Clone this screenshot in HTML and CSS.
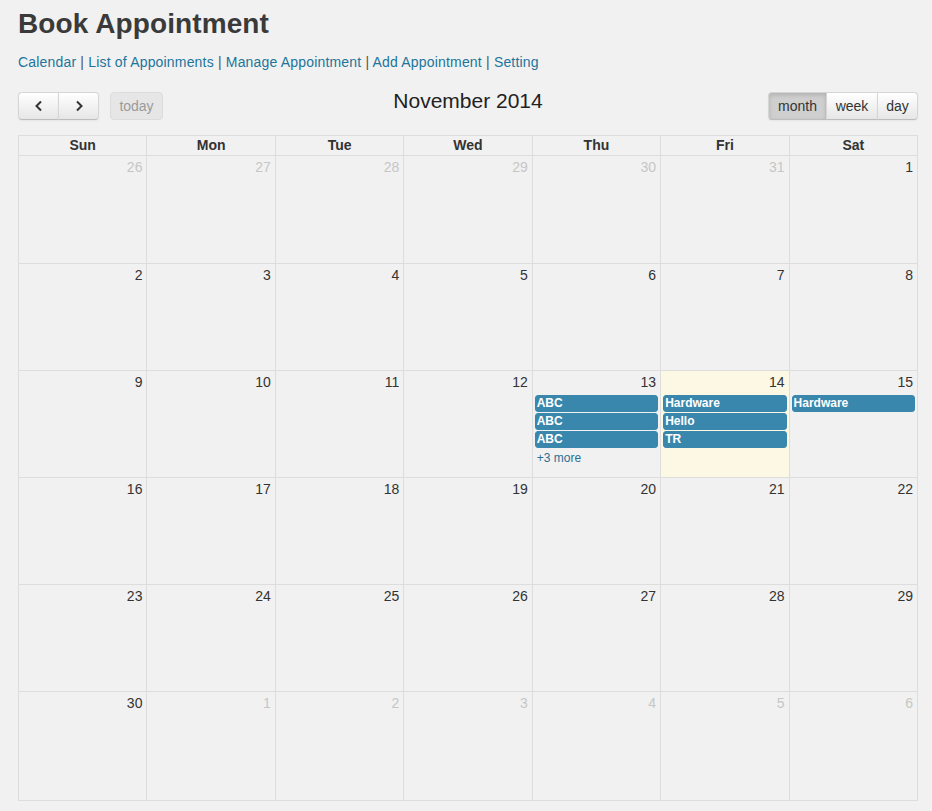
FILE: index.html
```html
<!DOCTYPE html>
<html>
<head>
<meta charset="utf-8">
<link rel="stylesheet" href="styles.css">
</head>
<body>
<div class="wrap">
  <h1 class="title">Book Appointment</h1>
  <nav class="links">
    <a href="#">Calendar</a> | <a href="#">List of Appoinments</a> | <a href="#">Manage Appointment</a> | <a href="#">Add Appointment</a> | <a href="#">Setting</a>
  </nav>
  <div class="toolbar">
    <div class="tb-left">
      <div class="btn-group">
        <button class="btn btn-icon"><svg width="12" height="12" viewBox="0 0 12 12"><polyline points="8,1.5 3.5,6 8,10.5" fill="none" stroke="#333" stroke-width="2"/></svg></button>
        <button class="btn btn-icon"><svg width="12" height="12" viewBox="0 0 12 12"><polyline points="4,1.5 8.5,6 4,10.5" fill="none" stroke="#333" stroke-width="2"/></svg></button>
      </div>
      <button class="btn btn-disabled">today</button>
    </div>
    <h2 class="month-title">November 2014</h2>
    <div class="btn-group">
      <button class="btn btn-active">month</button>
      <button class="btn btn-week">week</button>
      <button class="btn btn-day">day</button>
    </div>
  </div>
  <div class="cal">
    <div class="hd">Sun</div><div class="hd">Mon</div><div class="hd">Tue</div><div class="hd">Wed</div><div class="hd">Thu</div><div class="hd">Fri</div><div class="hd">Sat</div>

    <div class="day other"><div class="num">26</div></div>
    <div class="day other"><div class="num">27</div></div>
    <div class="day other"><div class="num">28</div></div>
    <div class="day other"><div class="num">29</div></div>
    <div class="day other"><div class="num">30</div></div>
    <div class="day other"><div class="num">31</div></div>
    <div class="day"><div class="num">1</div></div>

    <div class="day"><div class="num">2</div></div>
    <div class="day"><div class="num">3</div></div>
    <div class="day"><div class="num">4</div></div>
    <div class="day"><div class="num">5</div></div>
    <div class="day"><div class="num">6</div></div>
    <div class="day"><div class="num">7</div></div>
    <div class="day"><div class="num">8</div></div>

    <div class="day"><div class="num">9</div></div>
    <div class="day"><div class="num">10</div></div>
    <div class="day"><div class="num">11</div></div>
    <div class="day"><div class="num">12</div></div>
    <div class="day"><div class="num">13</div>
      <div class="ev">ABC</div><div class="ev">ABC</div><div class="ev">ABC</div>
      <a class="more" href="#">+3 more</a>
    </div>
    <div class="day today"><div class="num">14</div>
      <div class="ev">Hardware</div><div class="ev">Hello</div><div class="ev">TR</div>
    </div>
    <div class="day"><div class="num">15</div>
      <div class="ev">Hardware</div>
    </div>

    <div class="day"><div class="num">16</div></div>
    <div class="day"><div class="num">17</div></div>
    <div class="day"><div class="num">18</div></div>
    <div class="day"><div class="num">19</div></div>
    <div class="day"><div class="num">20</div></div>
    <div class="day"><div class="num">21</div></div>
    <div class="day"><div class="num">22</div></div>

    <div class="day"><div class="num">23</div></div>
    <div class="day"><div class="num">24</div></div>
    <div class="day"><div class="num">25</div></div>
    <div class="day"><div class="num">26</div></div>
    <div class="day"><div class="num">27</div></div>
    <div class="day"><div class="num">28</div></div>
    <div class="day"><div class="num">29</div></div>

    <div class="day"><div class="num">30</div></div>
    <div class="day other"><div class="num">1</div></div>
    <div class="day other"><div class="num">2</div></div>
    <div class="day other"><div class="num">3</div></div>
    <div class="day other"><div class="num">4</div></div>
    <div class="day other"><div class="num">5</div></div>
    <div class="day other"><div class="num">6</div></div>
  </div>
</div>
</body>
</html>
```

FILE: styles.css
```css
* { box-sizing: border-box; }
html, body { margin: 0; padding: 0; background: #f1f1f1; }
body { font-family: "Liberation Sans", Arial, sans-serif; color: #333; }
.wrap { padding: 7px 14px 0 18px; }
.title {
  margin: 0;
  font-size: 28px;
  line-height: 34px;
  font-weight: bold;
  color: #3a3a3a;
  letter-spacing: 0.1px;
}
.links {
  margin-top: 11px;
  font-size: 14px;
  line-height: 20px;
  color: #555;
  letter-spacing: 0.18px;
}
.links a { color: #21759b; text-decoration: none; }
.toolbar {
  margin-top: 20px;
  height: 28px;
  display: flex;
  justify-content: space-between;
  align-items: flex-start;
  position: relative;
}
.tb-left { display: flex; gap: 11px; }
.month-title {
  margin: 0;
  font-size: 21px;
  font-weight: normal;
  line-height: 20px;
  color: #222;
  position: absolute;
  left: 0; right: 0;
  top: -1px;
  text-align: center;
  pointer-events: none;
}
.btn-group { display: flex; }
.btn {
  height: 28px;
  padding: 0 8px;
  font-family: "Liberation Sans", Arial, sans-serif;
  font-size: 14px;
  color: #333;
  background: linear-gradient(#ffffff, #e6e6e6);
  border: 1px solid #d6d6d6;
  border-bottom-color: #bdbdbd;
  border-radius: 4px;
  box-shadow: inset 0 1px 0 rgba(255,255,255,.2), 0 1px 2px rgba(0,0,0,.05);
  margin: 0;
}
.btn-group .btn { border-radius: 0; margin-left: -1px; }
.btn-group .btn:first-child { border-radius: 4px 0 0 4px; margin-left: 0; }
.btn-group .btn:last-child { border-radius: 0 4px 4px 0; }
.btn-icon { width: 41px; padding: 0; display: flex; align-items: center; justify-content: center; }
.btn-disabled {
  background: #e6e6e6;
  color: #9a9a9a;
  border-color: #dcdcdc;
  box-shadow: none;
  width: 53px;
  padding: 0;
}
.btn-active {
  background: #cfcfcf;
  box-shadow: inset 0 2px 4px rgba(0,0,0,.15), 0 1px 2px rgba(0,0,0,.05);
  width: 59px;
  padding: 0;
}
.btn-week { width: 52px; padding: 0; }
.btn-day { width: 41px; padding: 0; }
.cal {
  margin-top: 15px;
  display: grid;
  grid-template-columns: repeat(7, 1fr);
  grid-template-rows: 20px 108px repeat(4, 107px) 1fr;
  height: 666px;
  border-right: 1px solid #dddddd;
  border-bottom: 1px solid #dddddd;
}
.hd {
  border-left: 1px solid #dddddd;
  border-top: 1px solid #dddddd;
  text-align: center;
  font-weight: bold;
  font-size: 14px;
  line-height: 18px;
  color: #333;
}
.day {
  border-left: 1px solid #dddddd;
  border-top: 1px solid #dddddd;
  overflow: hidden;
}
.day.today { background: #fcf8e3; }
.num {
  height: 22px;
  padding: 2px 4px 0 0;
  text-align: right;
  font-size: 14px;
  line-height: 18px;
  color: #333;
}
.other .num { color: #c6c6c6; }
.ev {
  margin: 2px 2px 0 2px;
  height: 17px;
  background: #3a87ad;
  border: 1px solid #3a87ad;
  border-radius: 3px;
  color: #fff;
  font-size: 12px;
  font-weight: bold;
  line-height: 15px;
  padding-left: 1px;
}
.ev + .ev { margin-top: 1px; }
.more {
  display: block;
  margin: 3px 0 0 4px;
  font-size: 12px;
  line-height: 15px;
  color: #2a6f95;
  text-decoration: none;
}
```
